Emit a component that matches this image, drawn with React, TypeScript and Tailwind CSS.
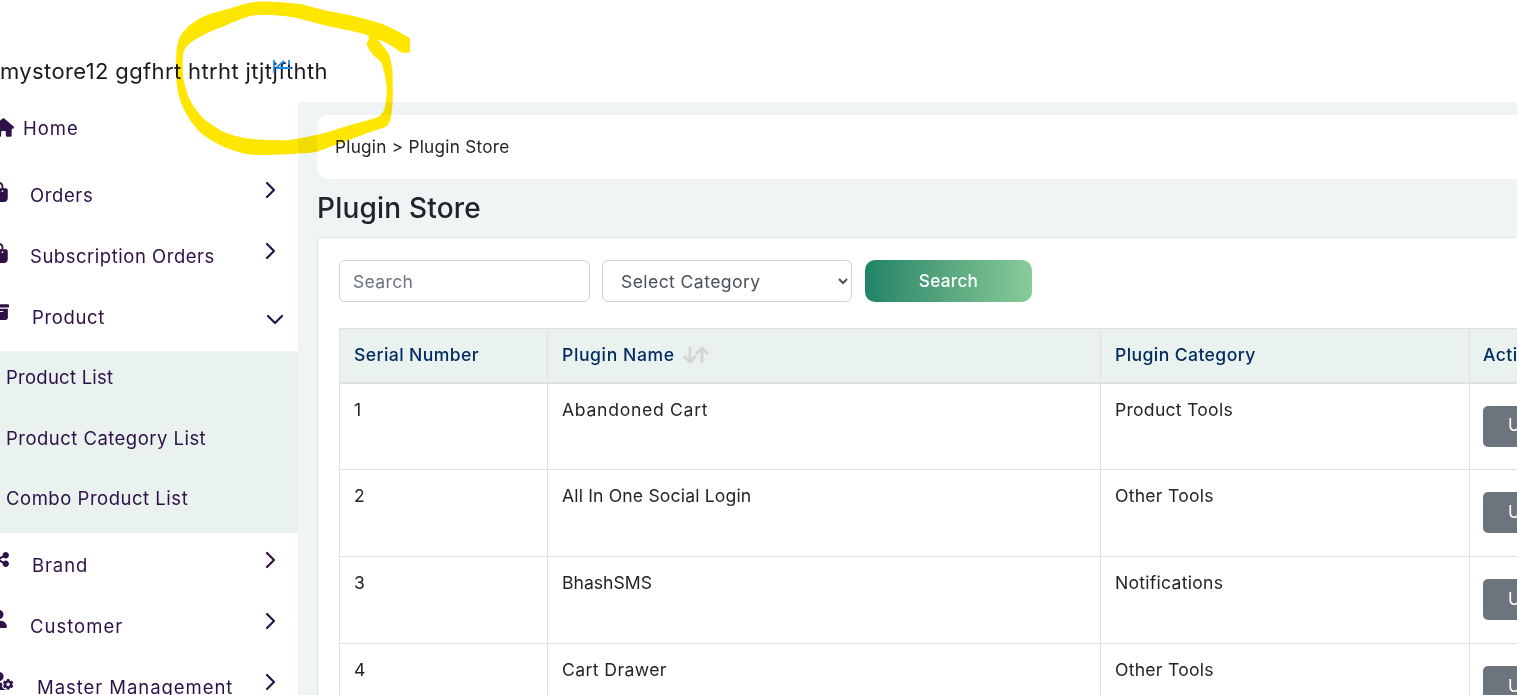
import { FaHouse, FaBagShopping, FaBoxArchive, FaShareNodes, FaUser, FaUserGear } from "react-icons/fa6";
import type { ReactNode } from "react";

const Chevron = ({ down = false }: { down?: boolean }) =>
  down ? (
    <svg width="18" height="11" viewBox="0 0 18 11" fill="none" stroke="#2d1147" strokeWidth="2.2" strokeLinecap="round" strokeLinejoin="round"><path d="M2 2l7 7 7-7" /></svg>
  ) : (
    <svg width="11" height="18" viewBox="0 0 11 18" fill="none" stroke="#2d1147" strokeWidth="2.2" strokeLinecap="round" strokeLinejoin="round"><path d="M2 2l7 7-7 7" /></svg>
  );

type Item = { icon: ReactNode; label: string; row: string; iconCls: string; labelCls: string };

function NavRow({ icon, label, row, iconCls, labelCls, down }: Item & { down?: boolean }) {
  return (
    <div className={`flex shrink-0 ${row}`}>
      <div className={iconCls}>{icon}</div>
      <div className={`flex-1 whitespace-nowrap text-[18.5px] leading-[26px] text-[#2d1147] ${labelCls}`}>{label}</div>
      <div className={down ? "mr-[14px] mt-[10px]" : "mr-[22px] mt-[-1px]"}><Chevron down={down} /></div>
    </div>
  );
}

const rows = [
  { n: "1", name: "Abandoned Cart", nameCls: "tracking-[0.7px]", cat: "Product Tools", catCls: "tracking-[0.25px]" },
  { n: "2", name: "All In One Social Login", nameCls: "tracking-[0.15px]", cat: "Other Tools", catCls: "tracking-[0.25px]" },
  { n: "3", name: "BhashSMS", nameCls: "tracking-[0px]", cat: "Notifications", catCls: "tracking-[0.25px]" },
  { n: "4", name: "Cart Drawer", nameCls: "tracking-[0.4px]", cat: "Other Tools", catCls: "tracking-[0.25px]" },
];

const outerPts: number[][] = [[1230,115],[1190,92],[1140,70],[1070,50],[970,30],[900,12],[810,5],[750,8],[680,28],[610,50],[570,75],[540,110],[530,150],[528,230],[540,300],[570,360],[610,405],[670,440],[740,462],[810,465],[900,460],[950,455],[1020,430],[1100,400],[1160,378],[1173,350],[1178,300],[1177,210],[1165,160],[1135,120],[1170,135],[1205,158]];
const inner: number[][] = [[750,48],[810,45],[880,52],[970,75],[1100,105],[1100,135],[1120,165],[1145,190],[1160,260],[1155,320],[1135,350],[1050,375],[970,400],[870,420],[810,420],[740,415],[670,395],[610,355],[570,300],[550,235],[550,160],[570,130],[620,100],[680,75]];

function curve(p: number[][], closed: boolean) {
  const n = p.length;
  let d = `M${p[0][0]} ${p[0][1]}`;
  const at = (i: number) => (closed ? p[(i + n) % n] : p[Math.max(0, Math.min(n - 1, i))]);
  const last = closed ? n : n - 1;
  for (let i = 0; i < last; i++) {
    const a = at(i - 1), b = at(i), c = at(i + 1), e = at(i + 2);
    d += `C${b[0] + (c[0] - a[0]) / 8} ${b[1] + (c[1] - a[1]) / 8} ${c[0] - (e[0] - b[0]) / 8} ${c[1] - (e[1] - b[1]) / 8} ${c[0]} ${c[1]}`;
  }
  return d;
}

export default function App() {
  return (
    <div className="relative flex h-[695px] w-[1517px] flex-col overflow-hidden bg-white font-['Inter',sans-serif] text-[#212529]">
      <header className="flex h-[102px] shrink-0 items-start pt-[56px]">
        <span className="whitespace-nowrap text-[22px] leading-[30px] tracking-[0.37px] text-[#1b1b1b]">mystore12 ggfhrt htrht jtjtjfthth</span>
      </header>
      <div className="flex min-h-0 flex-1">
        <aside className="flex w-[298px] shrink-0 flex-col bg-white">
          <div className="flex h-[64px] shrink-0 pt-[13px]">
            <FaHouse className="ml-[-7px] mt-[3px] h-[19px] w-[21px] text-[#2d1147]" />
            <span className="ml-[9px] text-[18.5px] leading-[26px] tracking-[1px] text-[#2d1147]">Home</span>
          </div>
          <NavRow icon={<FaBagShopping className="h-[20px] w-[18px] text-[#2d1147]" />} label="Orders" labelCls="tracking-[0.6px]" row="h-[61px] pt-[16px]" iconCls="ml-[-10px] w-[40px]" />
          <NavRow icon={<FaBagShopping className="h-[20px] w-[18px] text-[#2d1147]" />} label="Subscription Orders" labelCls="tracking-[0.52px]" row="h-[61px] pt-[16px]" iconCls="ml-[-10px] w-[40px]" />
          <NavRow down icon={<FaBoxArchive className="h-[18px] w-[20px] text-[#2d1147]" />} label="Product" labelCls="tracking-[0.65px]" row="h-[63px] pt-[16px]" iconCls="ml-[-10px] mt-[-1px] w-[42px]" />
          <div className="flex h-[182px] shrink-0 flex-col bg-[#e9f2ef] pl-[6px] text-[18.5px] text-[#2d1147]">
            <div className="h-[61px] pt-[13px] leading-[26px] tracking-[0.25px]">Product List</div>
            <div className="h-[60px] pt-[13px] leading-[26px] tracking-[0.47px]">Product Category List</div>
            <div className="h-[61px] pt-[13px] leading-[26px] tracking-[0.52px]">Combo Product List</div>
          </div>
          <NavRow icon={<FaShareNodes className="h-[17px] w-[17px] text-[#2d1147]" />} label="Brand" labelCls="tracking-[0.9px]" row="h-[61px] pt-[19px]" iconCls="ml-[-7px] mt-[-1px] w-[39px]" />
          <NavRow icon={<FaUser className="h-[18px] w-[18px] text-[#2d1147]" />} label="Customer" labelCls="tracking-[1px]" row="h-[61px] pt-[19px]" iconCls="ml-[-10px] mt-[-3px] w-[40px]" />
          <NavRow icon={<FaUserGear className="h-[18px] w-[23px] text-[#2d1147]" />} label="Master Management" labelCls="tracking-[0.95px]" row="h-[61px] pt-[19px]" iconCls="ml-[-9px] mt-[-2px] w-[46px]" />
        </aside>
        <main className="min-w-0 flex-1 overflow-hidden bg-[#f0f4f4] pl-[19px] pt-[13px]">
          <div className="w-[1400px]">
            <div className="flex h-[64px] items-center rounded-xl bg-white pl-[18px] text-[17.2px] tracking-[0.25px] text-[#212529]">Plugin &gt; Plugin Store</div>
            <h1 className="mt-[10px] h-[48px] pt-px text-[28px] font-medium leading-[36px] tracking-[0.2px] text-[#212529]">Plugin Store</h1>
            <section className="rounded-t border border-[#dee2e6] bg-white px-[21px] pt-[22px]">
              <div className="flex items-center">
                <input readOnly placeholder="Search" className="h-[42px] w-[251px] rounded-md border border-[#ced4da] bg-white px-[13px] text-[17.6px] tracking-[0.3px] placeholder:text-[#6c757d]" />
                <select className="ml-[12px] h-[42px] w-[250px] rounded-md border border-[#ced4da] bg-white pl-[14px] pr-[6px] text-[17.6px] tracking-[0.4px] text-[#495057]">
                  <option>Select Category</option>
                </select>
                <button className="ml-[13px] h-[42px] w-[167px] rounded-[10px] bg-gradient-to-r from-[#1f8467] to-[#88cc98] text-[17.2px] font-medium tracking-[0.3px] text-white">Search</button>
              </div>
              <table className="mt-[26px] w-[1300px] table-fixed border-collapse text-[17.6px]">
                <colgroup>
                  <col className="w-[208px]" />
                  <col className="w-[553px]" />
                  <col className="w-[369px]" />
                  <col />
                </colgroup>
                <thead>
                  <tr className="h-[54px] border-b-2 border-[#dee2e6] bg-[#e9f2ef] text-left text-[#012a5e]">
                    <th className="border border-[#dee2e6] px-[14px] font-medium tracking-[0.4px]">Serial Number</th>
                    <th className="border border-[#dee2e6] px-[14px] font-medium tracking-[0.6px]">
                      <span className="flex items-center gap-[7px]">
                        Plugin Name
                        <svg width="28" height="18" viewBox="0 0 28 18" fill="none" stroke="#d4d4d4" strokeWidth="2.8"><path d="M8 1v15M2 10l6 6 6-6M20 17V2M14 8l6-6 6 6" /></svg>
                      </span>
                    </th>
                    <th className="border border-[#dee2e6] px-[14px] font-medium tracking-[0.4px]">Plugin Category</th>
                    <th className="border border-[#dee2e6] px-[13px] font-medium tracking-[0.4px]">Action</th>
                  </tr>
                </thead>
                <tbody>
                  {rows.map((r) => (
                    <tr key={r.n} className="h-[87px] align-top">
                      <td className="border border-[#dee2e6] px-[14px] pt-[13px] leading-[26px]">{r.n}</td>
                      <td className={`border border-[#dee2e6] px-[14px] pt-[13px] leading-[26px] ${r.nameCls}`}>{r.name}</td>
                      <td className={`border border-[#dee2e6] px-[14px] pt-[13px] leading-[26px] ${r.catCls}`}>{r.cat}</td>
                      <td className="border border-[#dee2e6] px-[13px] pt-[22px]">
                        <button className="h-[41px] rounded-[5px] bg-[#6c757d] px-[25px] text-[17px] text-white">Uninstall</button>
                      </td>
                    </tr>
                  ))}
                </tbody>
              </table>
            </section>
          </div>
        </main>
      </div>
      <svg className="pointer-events-none absolute left-0 top-0 mix-blend-multiply" width="420" height="160" viewBox="0 0 1260 480">
        <path d={`${curve(outerPts, false)}L1230 158Z ${curve(inner, true)}Z`} fill="#ffe600" fillRule="evenodd" />
      </svg>
      <svg className="pointer-events-none absolute left-[272px] top-[59px]" width="22" height="15" viewBox="0 0 22 15" fill="none" stroke="#1e88f0" strokeWidth="1.8">
        <path d="M2 1v13M4 9h15M4 9l8-7M17 1v5" />
      </svg>
    </div>
  );
}
